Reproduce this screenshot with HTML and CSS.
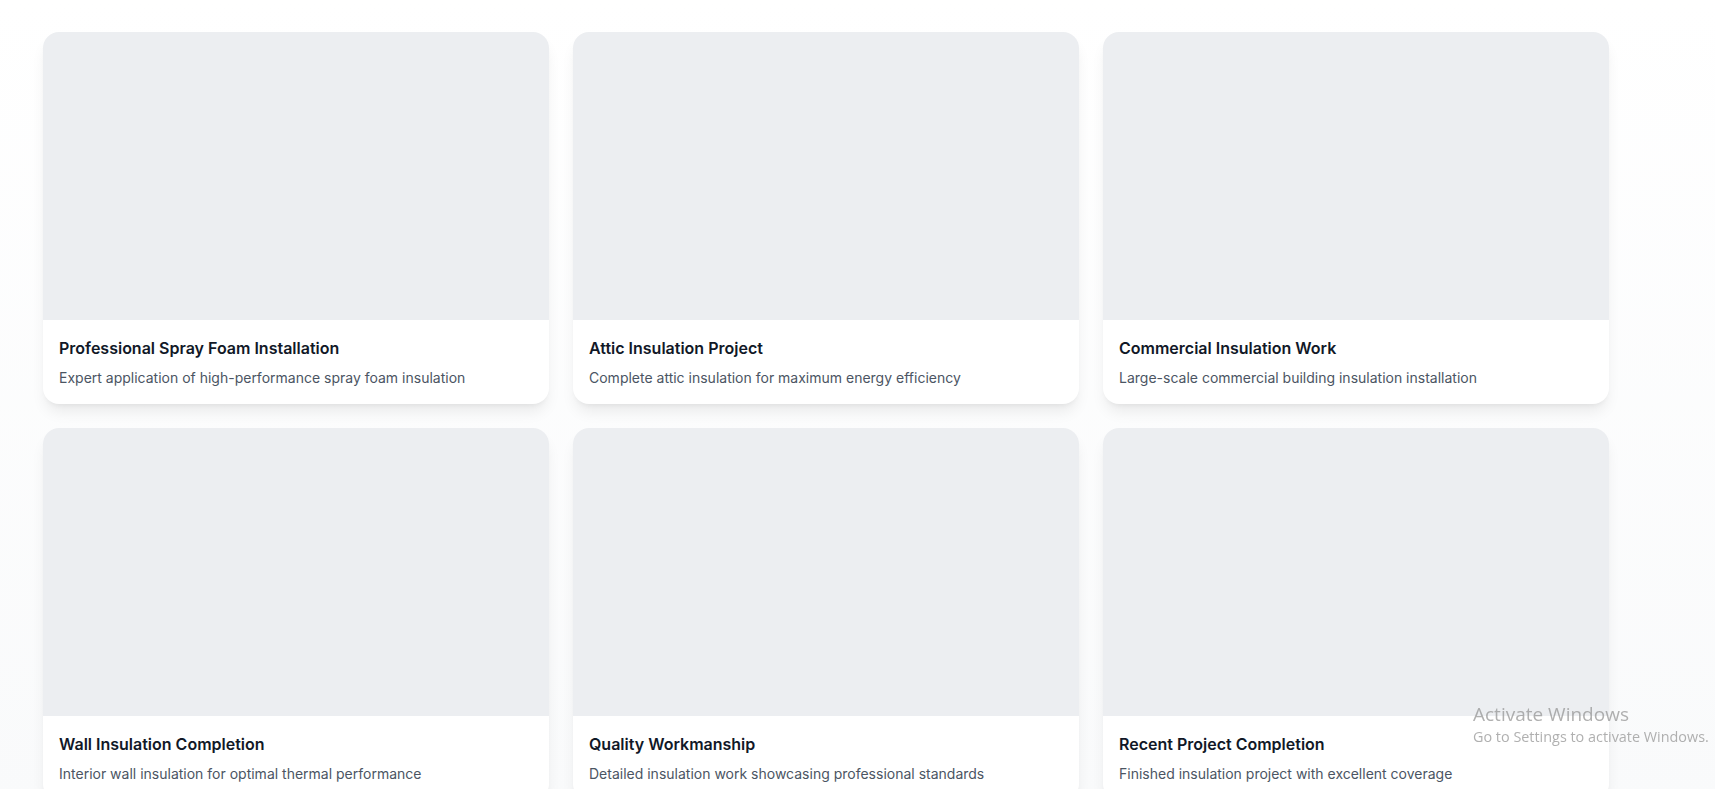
FILE: index.html
```html
<!DOCTYPE html>
<html lang="en">
<head>
<meta charset="utf-8">
<title>Projects Gallery</title>
<link rel="stylesheet" href="styles.css">
</head>
<body>
<main class="page">
  <section class="grid">
    <article class="card">
      <div class="card-img"></div>
      <div class="card-body">
        <h3 class="card-title">Professional Spray Foam Installation</h3>
        <p class="card-desc">Expert application of high-performance spray foam insulation</p>
      </div>
    </article>
    <article class="card">
      <div class="card-img"></div>
      <div class="card-body">
        <h3 class="card-title">Attic Insulation Project</h3>
        <p class="card-desc">Complete attic insulation for maximum energy efficiency</p>
      </div>
    </article>
    <article class="card">
      <div class="card-img"></div>
      <div class="card-body">
        <h3 class="card-title">Commercial Insulation Work</h3>
        <p class="card-desc">Large-scale commercial building insulation installation</p>
      </div>
    </article>
    <article class="card">
      <div class="card-img"></div>
      <div class="card-body">
        <h3 class="card-title">Wall Insulation Completion</h3>
        <p class="card-desc">Interior wall insulation for optimal thermal performance</p>
      </div>
    </article>
    <article class="card">
      <div class="card-img"></div>
      <div class="card-body">
        <h3 class="card-title">Quality Workmanship</h3>
        <p class="card-desc">Detailed insulation work showcasing professional standards</p>
      </div>
    </article>
    <article class="card">
      <div class="card-img"></div>
      <div class="card-body">
        <h3 class="card-title">Recent Project Completion</h3>
        <p class="card-desc">Finished insulation project with excellent coverage</p>
      </div>
    </article>
  </section>
</main>
<div class="watermark">
  <div class="wm-title">Activate Windows</div>
  <div class="wm-sub">Go to Settings to activate Windows.</div>
</div>
</body>
</html>
```

FILE: styles.css
```css
html, body {
  margin: 0;
  padding: 0;
}
body {
  font-family: Inter, "Liberation Sans", sans-serif;
  background: linear-gradient(to bottom, #ffffff 0%, #f9fafb 100%);
  min-height: 789px;
  overflow: hidden;
}
.page {
  padding: 32px 0 0 43px;
}
.grid {
  display: grid;
  grid-template-columns: repeat(3, 506px);
  column-gap: 24px;
  row-gap: 24px;
}
.card {
  background: #ffffff;
  border-radius: 16px;
  overflow: hidden;
  box-shadow: 0 10px 15px -3px rgba(0, 0, 0, 0.08), 0 4px 6px -4px rgba(0, 0, 0, 0.08);
}
.card-img {
  height: 288px;
  background: #eceef1;
}
.card-body {
  padding: 16px;
}
.card-title {
  margin: 0 0 8px;
  font-size: 16px;
  line-height: 24px;
  font-weight: 600;
  color: #111827;
}
.card-desc {
  margin: 0;
  font-size: 14px;
  line-height: 20px;
  color: #4b5563;
}
.watermark {
  position: fixed;
  left: 1473px;
  top: 701px;
  font-family: "Open Sans", "Liberation Sans", sans-serif;
  color: rgba(150, 150, 150, 0.75);
  pointer-events: none;
}
.wm-title {
  font-size: 19px;
  line-height: 26px;
}
.wm-sub {
  font-size: 14.4px;
  line-height: 20px;
}
```
